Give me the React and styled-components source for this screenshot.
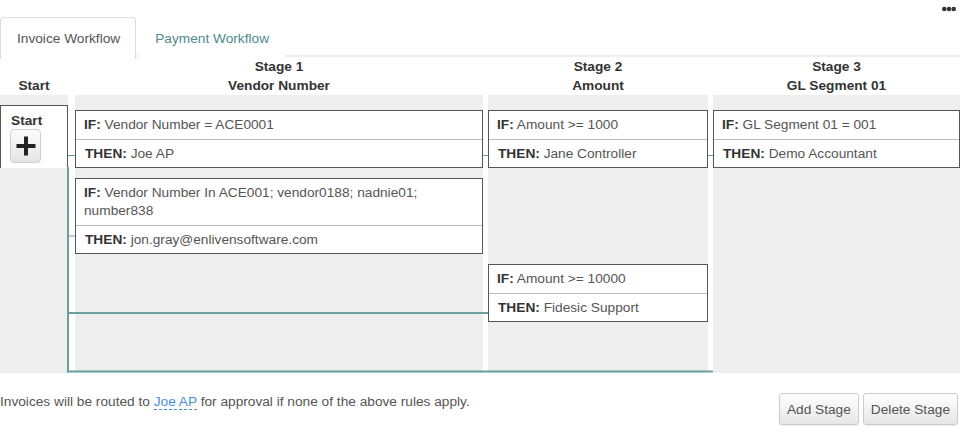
import React from "react";
import styled, { createGlobalStyle } from "styled-components";

const FS = "13.7px";

const GlobalStyle = createGlobalStyle`
  html, body { margin: 0; padding: 0; background: #fff; }
  body { font-family: "Liberation Sans", Arial, sans-serif; font-size: ${FS}; color: #555; }
  * { box-sizing: border-box; }
`;

const COLS = "70px 408px 220px 1fr";

const Page = styled.div`
  width: 960px;
  height: 443px;
  display: flex;
  flex-direction: column;
`;

const TopBar = styled.div`
  height: 17px;
  display: flex;
  justify-content: flex-end;
  align-items: center;
  padding-right: 4px;
`;

const TabBar = styled.div`
  display: flex;
  height: 40px;
  border-bottom: 2px solid #eeeeee;
`;

const Tab = styled.div`
  padding: 0 15px 0 16px;
  display: flex;
  align-items: center;
  font-size: ${FS};
  color: ${(p) => (p.$active ? "#555" : "#4e8b8b")};
  background: #fff;
  border: 1px solid ${(p) => (p.$active ? "#dddddd" : "transparent")};
  border-bottom: none;
  border-radius: 4px 4px 0 0;
  margin-bottom: -2px;
  margin-right: 2px;
  height: 42px;
`;

const HeaderRow = styled.div`
  display: grid;
  grid-template-columns: ${COLS};
  column-gap: 5px;
  height: 38px;
`;

const HeaderCell = styled.div`
  font-weight: bold;
  color: #333;
  font-size: ${FS};
  line-height: 19px;
  text-align: center;
  display: flex;
  flex-direction: column;
  justify-content: flex-end;
  padding-right: ${(p) => (p.$start ? "2px" : "0")};
`;

const Board = styled.div`
  position: relative;
  display: grid;
  grid-template-columns: ${COLS};
  grid-template-rows: 5px auto auto auto 1fr;
  column-gap: 5px;
  row-gap: 10px;
  height: 278px;
`;

const ColumnBg = styled.div`
  grid-column: ${(p) => p.$col};
  grid-row: 1 / -1;
  background: #eeeeee;
  width: ${(p) => (p.$narrow ? "68px" : "auto")};
`;

const StartBox = styled.div`
  grid-column: 1;
  grid-row: 1 / 3;
  margin-top: 10px;
  width: 68px;
  background: #fff;
  border: 1px solid #555;
  border-bottom: none;
  padding: 7px 9px 0;
  position: relative;
  z-index: 1;
`;

const StartLabel = styled.div`
  font-weight: bold;
  color: #333;
  font-size: ${FS};
  line-height: 16px;
  padding-left: 1px;
`;

const PlusButton = styled.button`
  width: 31px;
  height: 34px;
  padding: 0;
  border: 1px solid #d0d0d0;
  border-radius: 4px;
  background: linear-gradient(#fdfdfd, #e4e4e4);
  display: flex;
  align-items: center;
  justify-content: center;
  cursor: pointer;
`;

const Card = styled.div`
  grid-column: ${(p) => p.$col};
  grid-row: ${(p) => p.$row};
  align-self: start;
  background: #fff;
  border: 1px solid #555;
  position: relative;
  z-index: 1;
`;

const CardRow = styled.div`
  padding: 5px 8px;
  line-height: 18px;
  font-size: ${FS};
  color: #555;
  & + & {
    border-top: 1px solid #bbbbbb;
    padding: 5px 8px 4px 9px;
  }
`;

const Key = styled.span`
  font-weight: bold;
  color: #333;
`;

const Connectors = styled.svg`
  position: absolute;
  left: 0;
  top: 0;
  width: 960px;
  height: 278px;
  pointer-events: none;
  z-index: 2;
`;

const Footer = styled.div`
  display: flex;
  justify-content: space-between;
  align-items: flex-start;
  padding: 20px 2px 0 0;
`;

const Note = styled.div`
  font-size: ${FS};
  line-height: 18px;
  color: #555;
`;

const Link = styled.a`
  color: #4a90d9;
  text-decoration: none;
  border-bottom: 1px dashed #4a90d9;
`;

const Buttons = styled.div`
  display: flex;
  gap: 4px;
`;

const Button = styled.button`
  height: 32px;
  padding: 0 7px;
  font-family: "Liberation Sans", Arial, sans-serif;
  font-size: ${FS};
  color: #555;
  border: 1px solid #cccccc;
  border-radius: 3px;
  background: linear-gradient(#ffffff, #e6e6e6);
  box-shadow: 0 1px 1px rgba(0, 0, 0, 0.08);
  cursor: pointer;
`;

const rules = [
  { col: 2, row: 2, ifText: "Vendor Number = ACE0001", thenText: "Joe AP" },
  {
    col: 2,
    row: 3,
    ifText: "Vendor Number In ACE001; vendor0188; nadnie01; number838",
    thenText: "jon.gray@enlivensoftware.com",
  },
  { col: 3, row: 2, ifText: "Amount >= 1000", thenText: "Jane Controller" },
  { col: 3, row: 4, ifText: "Amount >= 10000", thenText: "Fidesic Support" },
  { col: 4, row: 2, ifText: "GL Segment 01 = 001", thenText: "Demo Accountant" },
];

const TEAL = "#6a9fa0";

export default function App() {
  return (
    <Page>
      <GlobalStyle />
      <TopBar>
        <svg width="14" height="6" viewBox="0 0 14 6">
          <circle cx="2.3" cy="3" r="2.3" fill="#333" />
          <circle cx="7" cy="3" r="2.3" fill="#333" />
          <circle cx="11.7" cy="3" r="2.3" fill="#333" />
        </svg>
      </TopBar>
      <TabBar>
        <Tab $active>Invoice Workflow</Tab>
        <Tab>Payment Workflow</Tab>
      </TabBar>
      <HeaderRow>
        <HeaderCell $start>
          <div>Start</div>
        </HeaderCell>
        <HeaderCell>
          <div>Stage 1</div>
          <div>Vendor Number</div>
        </HeaderCell>
        <HeaderCell>
          <div>Stage 2</div>
          <div>Amount</div>
        </HeaderCell>
        <HeaderCell>
          <div>Stage 3</div>
          <div>GL Segment 01</div>
        </HeaderCell>
      </HeaderRow>
      <Board>
        <ColumnBg $col={1} $narrow />
        <ColumnBg $col={2} />
        <ColumnBg $col={3} />
        <ColumnBg $col={4} />
        <StartBox>
          <StartLabel>Start</StartLabel>
          <PlusButton aria-label="Add rule">
            <svg width="20" height="20" viewBox="0 0 20 20">
              <rect x="8" y="0.5" width="4" height="19" fill="#222" />
              <rect x="0.5" y="8" width="19" height="4" fill="#222" />
            </svg>
          </PlusButton>
        </StartBox>
        {rules.map((r, i) => (
          <Card key={i} $col={r.col} $row={r.row}>
            <CardRow>
              <Key>IF:</Key> {r.ifText}
            </CardRow>
            <CardRow>
              <Key>THEN:</Key> {r.thenText}
            </CardRow>
          </Card>
        ))}
        <Connectors viewBox="0 0 960 278">
          <line x1="68" y1="60.5" x2="75" y2="60.5" stroke={TEAL} strokeWidth="1" />
          <line x1="68" y1="72" x2="68" y2="277.5" stroke={TEAL} strokeWidth="2" />
          <line x1="68" y1="141" x2="75" y2="141" stroke={TEAL} strokeWidth="1" />
          <line x1="67" y1="218" x2="488" y2="218" stroke={TEAL} strokeWidth="2" />
          <line x1="67" y1="276.5" x2="713" y2="276.5" stroke={TEAL} strokeWidth="2" />
          <line x1="483" y1="60.5" x2="488" y2="60.5" stroke={TEAL} strokeWidth="1" />
          <line x1="708" y1="60.5" x2="713" y2="60.5" stroke={TEAL} strokeWidth="1" />
        </Connectors>
      </Board>
      <Footer>
        <Note>
          Invoices will be routed to <Link href="#">Joe AP</Link> for approval if none of the above
          rules apply.
        </Note>
        <Buttons>
          <Button>Add Stage</Button>
          <Button>Delete Stage</Button>
        </Buttons>
      </Footer>
    </Page>
  );
}
